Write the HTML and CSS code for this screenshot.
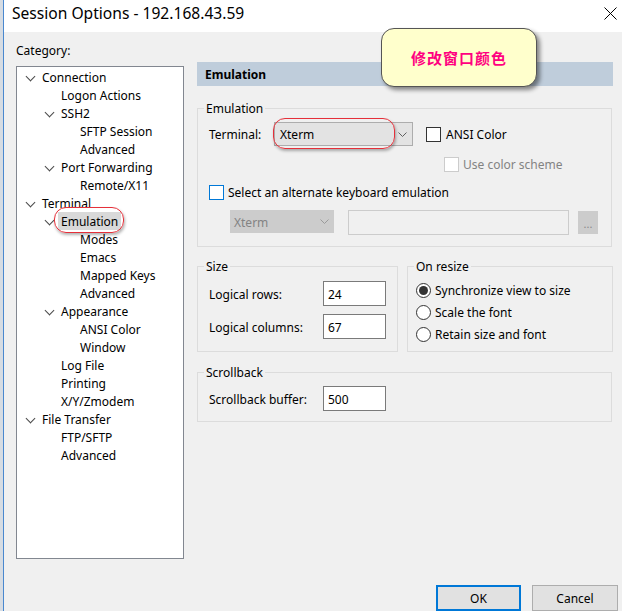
FILE: index.html
```html
<!DOCTYPE html>
<html lang="en">
<head>
<meta charset="utf-8">
<title>Session Options</title>
<link rel="stylesheet" href="styles.css">
</head>
<body>
<div class="screen">
  <div class="backdrop-edge"></div>
  <div class="dialog">
    <header class="titlebar">
      <span class="title">Session Options - 192.168.43.59</span>
      <svg class="close" viewBox="0 0 13 13" aria-hidden="true"><path d="M0.5 0.5 L12.5 12.5 M12.5 0.5 L0.5 12.5"/></svg>
    </header>

    <div class="content">
      <div class="main">
        <div class="category">
          <div class="category-label">Category:</div>
          <ul class="tree">
            <li class="node l0"><span class="twisty open"></span><span class="label">Connection</span></li>
            <li class="node l1"><span class="twisty"></span><span class="label">Logon Actions</span></li>
            <li class="node l1"><span class="twisty open"></span><span class="label">SSH2</span></li>
            <li class="node l2"><span class="twisty"></span><span class="label">SFTP Session</span></li>
            <li class="node l2"><span class="twisty"></span><span class="label">Advanced</span></li>
            <li class="node l1"><span class="twisty open"></span><span class="label">Port Forwarding</span></li>
            <li class="node l2"><span class="twisty"></span><span class="label">Remote/X11</span></li>
            <li class="node l0"><span class="twisty open"></span><span class="label">Terminal</span></li>
            <li class="node l1"><span class="twisty open"></span><span class="label selected marked">Emulation</span></li>
            <li class="node l2"><span class="twisty"></span><span class="label">Modes</span></li>
            <li class="node l2"><span class="twisty"></span><span class="label">Emacs</span></li>
            <li class="node l2"><span class="twisty"></span><span class="label">Mapped Keys</span></li>
            <li class="node l2"><span class="twisty"></span><span class="label">Advanced</span></li>
            <li class="node l1"><span class="twisty open"></span><span class="label">Appearance</span></li>
            <li class="node l2"><span class="twisty"></span><span class="label">ANSI Color</span></li>
            <li class="node l2"><span class="twisty"></span><span class="label">Window</span></li>
            <li class="node l1"><span class="twisty"></span><span class="label">Log File</span></li>
            <li class="node l1"><span class="twisty"></span><span class="label">Printing</span></li>
            <li class="node l1"><span class="twisty"></span><span class="label">X/Y/Zmodem</span></li>
            <li class="node l0"><span class="twisty open"></span><span class="label">File Transfer</span></li>
            <li class="node l1"><span class="twisty"></span><span class="label">FTP/SFTP</span></li>
            <li class="node l1"><span class="twisty"></span><span class="label">Advanced</span></li>
          </ul>
        </div>

        <div class="panel">
          <div class="panel-header">Emulation</div>

          <fieldset class="group group-emulation">
            <legend>Emulation</legend>
            <div class="group-body">
              <div class="row row-terminal">
                <span class="field-label terminal-label">Terminal:</span>
                <div class="combo marked-box">
                  <span class="combo-value">Xterm</span>
                  <svg class="combo-arrow" viewBox="0 0 9 5" aria-hidden="true"><path d="M0.5 0.5 L4.5 4.5 L8.5 0.5"/></svg>
                </div>
                <span class="check check-ansi"></span>
                <span class="check-label">ANSI Color</span>
              </div>
              <div class="row row-scheme">
                <span class="check disabled"></span>
                <span class="check-label muted">Use color scheme</span>
              </div>
              <div class="row row-alt">
                <span class="check focused"></span>
                <span class="check-label">Select an alternate keyboard emulation</span>
              </div>
              <div class="row row-alt-fields">
                <div class="combo disabled">
                  <span class="combo-value">Xterm</span>
                  <svg class="combo-arrow" viewBox="0 0 9 5" aria-hidden="true"><path d="M0.5 0.5 L4.5 4.5 L8.5 0.5"/></svg>
                </div>
                <div class="text-input disabled wide"></div>
                <div class="browse disabled">...</div>
              </div>
            </div>
          </fieldset>

          <div class="group-pair">
            <fieldset class="group">
              <legend>Size</legend>
              <div class="group-body size-body">
                <div class="row size-row">
                  <span class="field-label size-label">Logical rows:</span>
                  <div class="text-input num">24</div>
                </div>
                <div class="row size-row">
                  <span class="field-label size-label">Logical columns:</span>
                  <div class="text-input num">67</div>
                </div>
              </div>
            </fieldset>
            <fieldset class="group">
              <legend>On resize</legend>
              <div class="group-body resize-body">
                <div class="radio-row"><span class="radio checked"></span><span class="check-label">Synchronize view to size</span></div>
                <div class="radio-row"><span class="radio"></span><span class="check-label">Scale the font</span></div>
                <div class="radio-row"><span class="radio"></span><span class="check-label">Retain size and font</span></div>
              </div>
            </fieldset>
          </div>

          <fieldset class="group group-scrollback">
            <legend>Scrollback</legend>
            <div class="group-body scroll-body">
              <div class="row size-row">
                <span class="field-label size-label">Scrollback buffer:</span>
                <div class="text-input num">500</div>
              </div>
            </div>
          </fieldset>
        </div>
      </div>

      <div class="buttons">
        <div class="button default">OK</div>
        <div class="button">Cancel</div>
      </div>
    </div>
  </div>

  <div class="callout">修改窗口颜色</div>
</div>
</body>
</html>
```

FILE: styles.css
```css
* {
  box-sizing: border-box;
}

html,
body {
  margin: 0;
  padding: 0;
}

body {
  width: 622px;
  height: 611px;
  overflow: hidden;
  background: #f0f0f0;
  color: #000;
  font: 12px/16px "Noto Sans", "Open Sans", sans-serif;
}

.screen {
  position: relative;
  display: flex;
  height: 611px;
}

/* sliver of the window behind the dialog */
.backdrop-edge {
  flex: none;
  width: 4px;
  background: #d6dce3;
  border-right: 1px solid #4a88cf;
}

.dialog {
  flex: 1;
  display: flex;
  flex-direction: column;
  min-width: 0;
}

/* ---------- title bar ---------- */
.titlebar {
  flex: none;
  height: 32px;
  background: #fff;
  display: flex;
  align-items: flex-start;
  justify-content: space-between;
  padding: 0 5px 0 8px;
}

.title {
  font-size: 15.6px;
  line-height: 20px;
  padding-top: 3px;
}

.close {
  width: 13px;
  height: 13px;
  margin-top: 7px;
  fill: none;
  stroke: #000;
  stroke-width: 1;
}

/* ---------- body ---------- */
.content {
  flex: 1;
  display: flex;
  flex-direction: column;
  padding-left: 12px;
}

.main {
  display: flex;
  gap: 13px;
}

.category {
  flex: none;
  width: 168px;
  padding-top: 10px;
}

.category-label {
  height: 17px;
  padding-top: 1px;
  margin-bottom: 7px;
}

.tree {
  height: 493px;
  margin: 0;
  padding: 1px 0;
  list-style: none;
  background: #fff;
  border: 1px solid #828790;
}

.node {
  display: flex;
  align-items: center;
  height: 18px;
}

.node.l0 { padding-left: 8px; }
.node.l1 { padding-left: 27px; }
.node.l2 { padding-left: 46px; }

.twisty {
  flex: none;
  width: 17px;
  height: 18px;
  position: relative;
}

.twisty.open::before {
  content: "";
  position: absolute;
  left: 2px;
  top: 5px;
  width: 6px;
  height: 6px;
  border-right: 1.6px solid #4a4a4a;
  border-bottom: 1.6px solid #4a4a4a;
  transform: rotate(45deg);
}

.label {
  white-space: nowrap;
  line-height: 16px;
  padding-top: 2px;
}

.label.selected {
  position: relative;
  background: #d9d9d9;
  padding: 2px 3px 0;
  margin-left: -3px;
}

/* red hand-drawn highlight */
.marked::after,
.marked-box::after {
  content: "";
  position: absolute;
  border: 1.5px solid #e5303a;
  border-radius: 12px;
  box-shadow: 1px 2px 3px rgba(0, 0, 0, 0.3);
  pointer-events: none;
}

.marked::after {
  left: -4px;
  right: -3px;
  top: -5px;
  bottom: -3px;
}

/* ---------- right panel ---------- */
.panel {
  flex: none;
  width: 416px;
  margin-top: 30px;
}

.panel-header {
  height: 24px;
  line-height: 22px;
  padding: 2px 0 0 8px;
  background: #bfcddb;
  font-weight: bold;
}

.group {
  margin: 0 1px 0 0;
  padding: 0;
  min-width: 0;
  border: 1px solid #dcdcdc;
}

.group legend {
  margin-left: 6px;
  padding: 2px 2px 0;
  line-height: 16px;
}

.group-emulation {
  margin-top: 13px;
}

.group-body {
  padding: 0 11px 11px;
}

.row {
  display: flex;
  align-items: center;
}

.field-label,
.check-label,
.combo-value {
  padding-top: 2px;
}

.field-label {
  flex: none;
  white-space: nowrap;
}

.terminal-label {
  width: 65px;
}

.row-terminal {
  margin-top: 5px;
  height: 24px;
}

.combo {
  position: relative;
  flex: none;
  width: 139px;
  height: 24px;
  display: flex;
  align-items: center;
  justify-content: space-between;
  padding: 0 5px 0 5px;
  background: #e3e3e3;
  border: 1px solid #adadad;
}

.combo-arrow {
  width: 9px;
  height: 5px;
  fill: none;
  stroke: #606060;
  stroke-width: 1;
}

.marked-box::after {
  left: -2px;
  top: -5px;
  width: 120px;
  height: 29px;
}

.check {
  flex: none;
  width: 15px;
  height: 15px;
  background: #fff;
  border: 1px solid #333;
}

.check-ansi {
  margin-left: 13px;
}

.check.disabled {
  border-color: #cccccc;
}

.check.focused {
  border-color: #0078d7;
}

.check-label {
  margin-left: 5px;
  white-space: nowrap;
}

.muted {
  color: #838383;
}

.row-scheme {
  height: 16px;
  margin-top: 10px;
  padding-left: 235px;
}

.row-scheme .check-label {
  margin-left: 4px;
}

.row-alt {
  height: 16px;
  margin-top: 12px;
}

.row-alt .check-label {
  margin-left: 4px;
}

.row-alt-fields {
  margin-top: 10px;
  height: 25px;
  align-items: flex-start;
}

.combo.disabled {
  width: 104px;
  height: 23px;
  margin-left: 21px;
  padding-left: 3px;
  padding-right: 4px;
  background: #cccccc;
  border-color: #cccccc;
  color: #838383;
}

.combo.disabled .combo-arrow {
  stroke: #9a9a9a;
}

.text-input {
  flex: none;
  height: 25px;
  line-height: 21px;
  padding: 2px 0 0 4px;
  background: #fff;
  border: 1px solid #7a7a7a;
}

.text-input.wide {
  width: 221px;
  margin-left: 14px;
}

.text-input.disabled {
  background: #f0f0f0;
  border-color: #cccccc;
}

.browse {
  flex: none;
  width: 20px;
  height: 23px;
  margin: 1px 0 0 9px;
  background: #cccccc;
  color: #8a8a8a;
  text-align: center;
  line-height: 26px;
  font-size: 11px;
}

.group-pair {
  display: grid;
  grid-template-columns: 201px 206px;
  gap: 9px;
  margin-top: 10px;
}

.group-pair .group {
  margin-right: 0;
}

.size-body {
  padding-bottom: 12px;
}

.size-row {
  height: 25px;
  margin-top: 6px;
}

.size-row + .size-row {
  margin-top: 8px;
}

.size-label {
  width: 114px;
}

.text-input.num {
  width: 63px;
}

.resize-body {
  padding: 4px 8px 6px;
}

.radio-row {
  display: flex;
  align-items: center;
  height: 22px;
}

.radio-row .check-label {
  margin-left: 4px;
}

.radio {
  flex: none;
  position: relative;
  width: 15px;
  height: 15px;
  border-radius: 50%;
  background: #fff;
  border: 1px solid #333;
}

.radio.checked::before {
  content: "";
  position: absolute;
  left: 2px;
  top: 2px;
  width: 9px;
  height: 9px;
  border-radius: 50%;
  background: #333;
}

.group-scrollback {
  margin-top: 11px;
}

.scroll-body {
  padding-bottom: 10px;
}

.scroll-body .size-row {
  margin-top: 5px;
}

/* ---------- dialog buttons ---------- */
.buttons {
  display: flex;
  justify-content: flex-end;
  gap: 11px;
  margin-top: 26px;
  padding-right: 4px;
}

.button {
  width: 86px;
  height: 26px;
  line-height: 22px;
  padding-top: 2px;
  text-align: center;
  background: #e1e1e1;
  border: 1px solid #adadad;
}

.button.default {
  width: 85px;
  border: 2px solid #0078d7;
  line-height: 20px;
}

/* yellow sticky note */
.callout {
  position: absolute;
  left: 381px;
  top: 28px;
  width: 156px;
  height: 59px;
  display: flex;
  align-items: center;
  justify-content: center;
  background: #ffffcc;
  border: 1.5px solid #555;
  border-radius: 13px;
  box-shadow: 3px 3px 4px rgba(0, 0, 0, 0.45);
  color: #ff0080;
  font: bold 15px/20px "Noto Sans CJK SC", sans-serif;
  letter-spacing: 1px;
}
```
